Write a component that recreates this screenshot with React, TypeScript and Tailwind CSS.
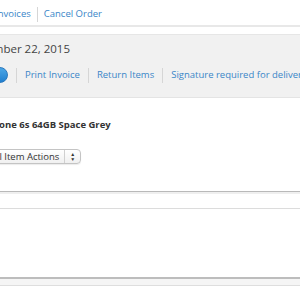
import React from "react";

const Sep = () => <span className="mx-[6px] h-[15px] w-px shrink-0 bg-[#d6d6d6]" />;
const LinkSep = () => <span className="mx-[8px] h-[15px] w-px shrink-0 bg-[#d6d6d6]" />;

const App = () => {
  return (
    <div className="w-[300px] h-[300px] overflow-hidden bg-white font-['Open_Sans',sans-serif] text-[9.5px] text-[#333]">
      <div className="-ml-[5px] flex items-center h-[25px] pt-[4px] whitespace-nowrap text-[#3a86c8]">
        <span>Invoices</span>
        <Sep />
        <span>Cancel Order</span>
      </div>
      <div className="h-[2px] bg-[#e8e8e8]" />
      <div className="mt-[7px] bg-[#f1f1f1] h-[63px] border-t border-[#e6e6e6]">
        <div className="-ml-[35px] pt-[7px] leading-[14px] text-[11.5px] text-[#444] whitespace-nowrap">November 22, 2015</div>
        <div className="mt-[11px] flex items-center whitespace-nowrap">
          <span className="-ml-[60px] h-[16px] w-[68px] shrink-0 rounded-full bg-gradient-to-b from-[#4aa6e6] to-[#1f7fcf] border border-[#2a78bd]" />
          <LinkSep />
          <span className="shrink-0 text-[#3a86c8]">Print Invoice</span>
          <LinkSep />
          <span className="shrink-0 text-[#3a86c8]">Return Items</span>
          <LinkSep />
          <span className="shrink-0 text-[#3a86c8]">Signature required for delivery</span>
        </div>
      </div>
      <div className="h-px bg-[#e4e4e4]" />
      <div className="-ml-[16px] mt-[20px] font-bold text-[#333] whitespace-nowrap">iPhone 6s 64GB Space Grey</div>
      <div className="mt-[17px] -ml-[14px] flex">
        <div className="flex items-center h-[15px] rounded-[4px] border border-[#c4c4c4] bg-gradient-to-b from-white to-[#f0f0f0] shadow-[0_1px_1px_rgba(0,0,0,0.08)] whitespace-nowrap">
          <span className="pl-[4px] pr-[5px]">All Item Actions</span>
          <span className="h-full w-px bg-[#d0d0d0]" />
          <span className="flex flex-col items-center justify-center px-[5px] leading-none text-[5px]">
            <span>▲</span>
            <span>▼</span>
          </span>
        </div>
      </div>
      <div className="mt-[27px] h-px bg-[#b9b9b9]" />
      <div className="h-[2px] bg-[#efefef]" />
      <div className="mt-[14px] h-px bg-[#dcdcdc]" />
      <div className="h-[68px]" />
      <div className="h-[2px] bg-[#bdbdbd]" />
      <div className="h-[6px] bg-[#f5f5f5]" />
      <div className="h-px bg-[#dedede]" />
    </div>
  );
};

export default App;
